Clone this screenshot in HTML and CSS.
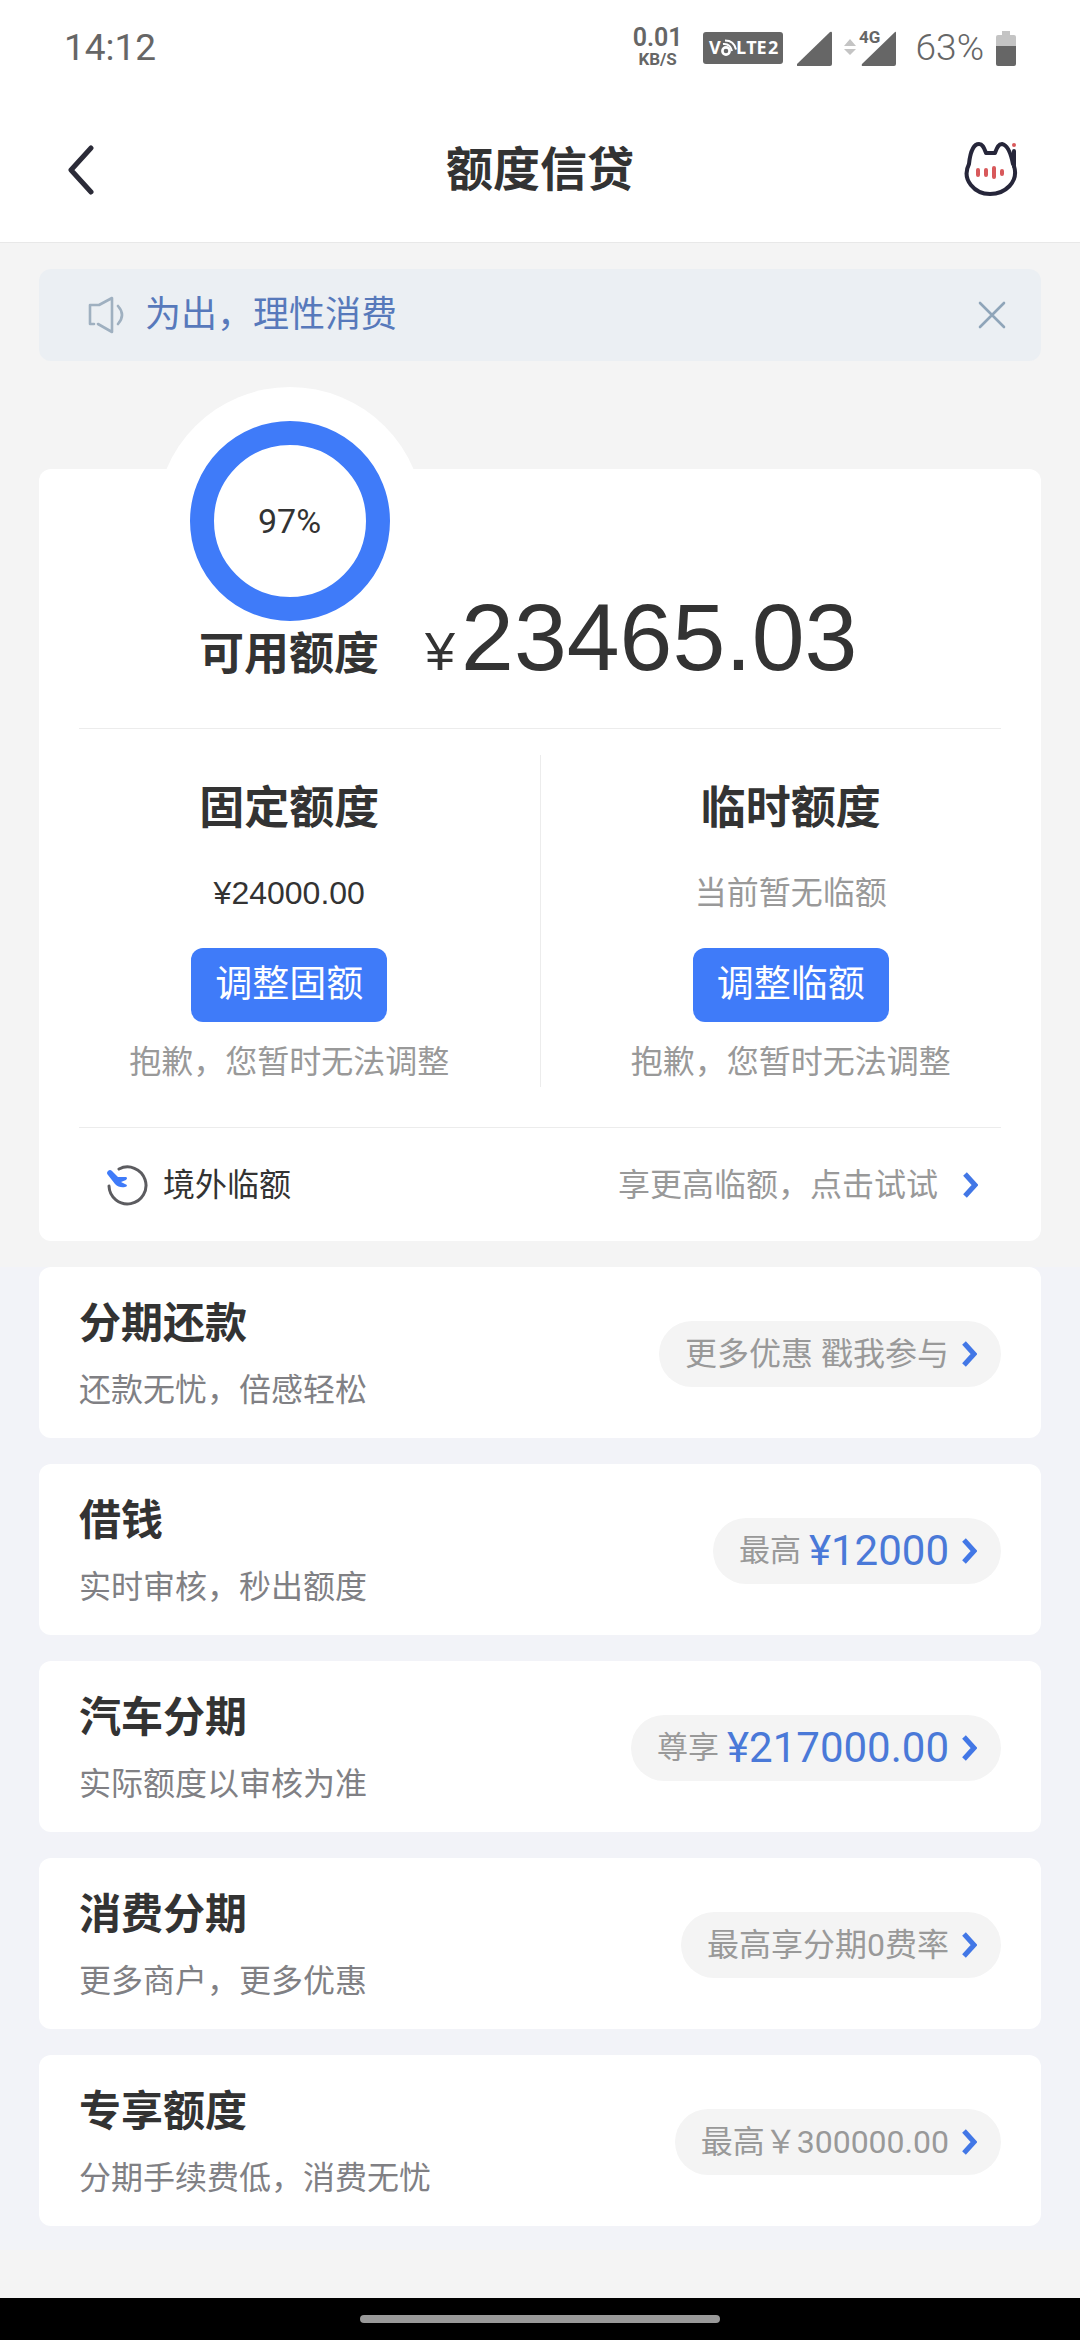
FILE: index.html
```html
<!DOCTYPE html>
<html lang="zh-CN">
<head>
<meta charset="utf-8">
<meta name="viewport" content="width=device-width, initial-scale=1">
<title>额度信贷</title>
<link rel="stylesheet" href="styles.css">
</head>
<body>
<svg width="0" height="0" class="defs" aria-hidden="true">
  <symbol id="chevron" viewBox="0 0 16 26"><path d="M3 2l10 11L3 24" fill="none" stroke="currentColor" stroke-width="5"/></symbol>
</svg>

<div class="status">
  <span class="clock">14:12</span>
  <div class="status-icons">
    <div class="speed"><span class="speed-value">0.01</span><span class="speed-unit">KB/S</span></div>
    <svg class="volte" width="80" height="34" viewBox="0 0 80 34" role="img" aria-label="VoLTE 2">
      <rect y="1" width="80" height="32" rx="3" fill="#666"/>
      <g fill="#fff" class="volte-text">
        <text x="6" y="23">V</text><text x="33" y="23">LTE</text><text x="65" y="23">2</text>
      </g>
      <g fill="none" stroke="#fff" stroke-width="2"><circle cx="23" cy="20" r="3.6" stroke-width="2.6"/><path d="M20 13q7-1 9 7M22 9.500q9 0 11 9"/></g>
    </svg>
    <svg class="signal" width="36" height="35" viewBox="0 0 36 35"><path d="M0 33L33 1q2-1 2 1v31q0 2-2 2H1q-2 0-1-2z" fill="#666"/></svg>
    <svg class="signal-data" width="53" height="51" viewBox="0 -8 53 51">
      <path d="M6 8l6 7H0zM6 24l6-6H0z" fill="#c4c4c4"/>
      <path d="M18 33L51 1q1-1 1 1v31q0 2-2 2H19q-2 0-1-2z" fill="#666"/>
      <text class="net" x="15" y="12" fill="#666">4G</text>
    </svg>
    <span class="percent">63%</span>
    <svg width="20" height="35" viewBox="0 0 20 35"><path d="M6 0h8v4h4q2 0 2 2v9H0V6q0-2 2-2h4z" fill="#c4c4c4"/><path d="M0 15h20v18q0 2-2 2H2q-2 0-2-2z" fill="#666"/></svg>
  </div>
</div>

<header class="header">
  <button class="icon-button" type="button" aria-label="返回">
    <svg width="28" height="50" viewBox="0 0 28 50"><path d="M24 3L4 25l20 22" fill="none" stroke="#2b2b38" stroke-width="5" stroke-linecap="round" stroke-linejoin="round"/></svg>
  </button>
  <h1>额度信贷</h1>
  <button class="icon-button service" type="button" aria-label="客服">
    <svg width="54" height="56" viewBox="0 0 54 56">
      <path d="M50 9v16M50 24c5 16-9 28-24 28S-3 38 5 22C6 12 9 2 15 2c4 0 5 4 7 9h9c2-5 3-9 7-9 6 1 9 10 11 20" fill="none" stroke="#26263a" stroke-width="4" stroke-linejoin="round" stroke-linecap="round"/>
      <circle cx="50" cy="3" r="2" fill="#d8595b"/>
      <path d="M14 28v5M22 28v5M30 26v9M38 29v3" stroke="#d8595b" stroke-width="4" stroke-linecap="round"/>
    </svg>
  </button>
</header>

<main>
  <section class="overview">
    <div class="notice">
      <svg width="40" height="38" viewBox="0 0 40 38" fill="none" stroke="#9fb0c0" stroke-width="2.6" stroke-linecap="round" stroke-linejoin="round"><path d="M7 28H3V9h9L25 2v34L11 28M31 10q8 9 0 18"/></svg>
      <p>为出，理性消费</p>
      <button class="close" type="button" aria-label="关闭"><svg width="30" height="30" viewBox="0 0 30 30"><path d="M3 3l24 24M27 3L3 27" stroke="#8fa5b9" stroke-width="2.6" stroke-linecap="round"/></svg></button>
    </div>

    <div class="card quota">
      <div class="gauge">
        <svg width="200" height="200" viewBox="0 0 200 200"><circle cx="100" cy="100" r="88" fill="none" stroke="#3f7bf9" stroke-width="24"/></svg>
        <span>97%</span>
      </div>
      <div class="available">
        <h2>可用额度</h2>
        <p class="amount"><span class="yen">¥</span>23465.03</p>
      </div>
      <div class="columns">
        <div class="column">
          <h2>固定额度</h2>
          <p class="value">¥24000.00</p>
          <button class="adjust" type="button">调整固额</button>
          <p class="hint">抱歉，您暂时无法调整</p>
        </div>
        <div class="column">
          <h2>临时额度</h2>
          <p class="hint">当前暂无临额</p>
          <button class="adjust" type="button">调整临额</button>
          <p class="hint">抱歉，您暂时无法调整</p>
        </div>
      </div>
      <a class="abroad" href="#">
        <svg width="44" height="44" viewBox="0 0 44 44"><path d="M14 6A18.500 18.500 0 1 1 4 23" fill="none" stroke="#5c5c60" stroke-width="3" stroke-linecap="round"/><path d="M3 8q2-2 4 0l6 6 8 0q2 1 0 3l-5 2 6 3q0 2-2 2-6 1-10-3L3 12q-2-2 0-4z" fill="#3f7bf9"/></svg>
        <span class="abroad-name">境外临额</span>
        <span class="hint">享更高临额，点击试试</span>
        <svg class="chevron" width="16" height="26"><use href="#chevron"/></svg>
      </a>
    </div>
  </section>

  <section class="products">
    <a class="card product" href="#">
      <div><h3>分期还款</h3><p>还款无忧，倍感轻松</p></div>
      <span class="pill">更多优惠 戳我参与<svg class="chevron" width="16" height="26"><use href="#chevron"/></svg></span>
    </a>
    <a class="card product" href="#">
      <div><h3>借钱</h3><p>实时审核，秒出额度</p></div>
      <span class="pill"><span class="prefix">最高</span><span class="price">¥12000</span><svg class="chevron" width="16" height="26"><use href="#chevron"/></svg></span>
    </a>
    <a class="card product" href="#">
      <div><h3>汽车分期</h3><p>实际额度以审核为准</p></div>
      <span class="pill"><span class="prefix">尊享</span><span class="price">¥217000.00</span><svg class="chevron" width="16" height="26"><use href="#chevron"/></svg></span>
    </a>
    <a class="card product" href="#">
      <div><h3>消费分期</h3><p>更多商户，更多优惠</p></div>
      <span class="pill">最高享分期0费率<svg class="chevron" width="16" height="26"><use href="#chevron"/></svg></span>
    </a>
    <a class="card product" href="#">
      <div><h3>专享额度</h3><p>分期手续费低，消费无忧</p></div>
      <span class="pill">最高￥300000.00<svg class="chevron" width="16" height="26"><use href="#chevron"/></svg></span>
    </a>
  </section>
</main>

<footer class="gesture-bar"><span></span></footer>
</body>
</html>
```

FILE: styles.css
```css
* { box-sizing: border-box; }

body {
  margin: 0;
  min-height: 100vh;
  display: flex;
  flex-direction: column;
  background: #f4f4f4;
  color: #333;
  font-family: Roboto, "Noto Sans CJK SC", sans-serif;
  font-size: 32px;
  line-height: 46px;
}

h1, h2, h3, p { margin: 0; }
a { color: inherit; text-decoration: none; }
svg { display: block; flex: none; }
button { border: 0; padding: 0; background: none; font: inherit; color: inherit; }
.defs { position: absolute; }

/* Status bar */
.status {
  display: flex;
  justify-content: space-between;
  align-items: center;
  height: 96px;
  padding: 0 64px;
  background: #fff;
  color: #666;
}
.clock { font-size: 37px; }
.status-icons { display: flex; align-items: center; }
.speed { display: flex; flex-direction: column; align-items: center; font-weight: 600; padding: 0 20px 2px 0; }
.speed-value { font-size: 25px; line-height: 24px; }
.speed-unit { font-size: 17px; line-height: 18px; font-weight: 700; }
.volte { margin-right: 14px; }
.volte-text { font: 700 18px "Open Sans", sans-serif; }
.signal { margin-right: 11px; }
.signal-data { margin-right: 19px; }
.net { font: 700 17px Roboto, sans-serif; }
.percent { font-size: 37px; font-weight: 300; margin-right: 12px; }

/* Title bar */
.header {
  display: grid;
  grid-template-columns: 1fr auto 1fr;
  align-items: center;
  height: 147px;
  padding: 2px 54px 0;
  background: #fff;
  border-bottom: 1px solid #e8e8e8;
}
.icon-button { display: flex; justify-content: center; width: 54px; }
.service { justify-self: end; margin-right: 8px; }
h1 { font-size: 47px; line-height: 64px; font-weight: 700; }

main { flex: 1; }

.overview { padding: 26px 39px; }
.notice {
  display: flex;
  align-items: center;
  gap: 18px;
  height: 92px;
  padding: 0 34px 0 48px;
  border-radius: 12px;
  background: #ebeff3;
  color: #5779bb;
  font-size: 36px;
}
.notice p { flex: 1; }

.card { border-radius: 12px; background: #fff; }

/* Quota card */
.quota { position: relative; margin-top: 108px; }
.gauge {
  position: absolute;
  top: -82px;
  left: 25%;
  display: grid;
  place-items: center;
  width: 268px;
  height: 268px;
  margin-left: -134px;
  border-radius: 50%;
  background: #fff;
  font-size: 34px;
}
.gauge > * { grid-area: 1 / 1; }
.available {
  position: relative;
  display: flex;
  align-items: baseline;
  gap: 46px;
  margin: 0 40px;
  padding: 114px 0 23px 120px;
  border-bottom: 1px solid #ececec;
}
h2 { font-size: 45px; line-height: 60px; font-weight: 700; }
.amount { font: 95px/108px "Liberation Sans", sans-serif; }
.yen { font-size: 54px; margin-right: 6px; }
.columns { display: flex; padding: 26px 0 40px; }
.column { flex: 1; display: flex; flex-direction: column; align-items: center; padding: 24px 0 2px; }
.column + .column { border-left: 1px solid #ececec; }
.column h2 { margin-bottom: 31px; }
.value { font-family: "Liberation Sans", sans-serif; }
.hint { color: #999; }
.adjust {
  height: 74px;
  margin: 32px 0 17px;
  padding: 0 24px;
  border-radius: 12px;
  background: #3f7bf9;
  color: #fff;
  font-size: 37px;
}
.abroad {
  display: flex;
  align-items: center;
  height: 114px;
  margin: 0 40px;
  padding: 0 23px 0 26px;
  border-top: 1px solid #ececec;
}
.abroad-name { flex: 1; margin-left: 14px; }
.chevron { color: #4277e6; }
.abroad .chevron { margin-left: 24px; }

/* Product list */
.products {
  display: flex;
  flex-direction: column;
  gap: 26px;
  padding: 0 39px 24px;
  background: #f2f3f8;
}
.product { display: flex; justify-content: space-between; align-items: center; padding: 27px 40px 25px; }
.product h3 { margin-bottom: 13px; font-size: 42px; line-height: 60px; font-weight: 700; }
.product p { color: #808084; }
.pill {
  display: flex;
  align-items: center;
  height: 66px;
  padding: 0 24px 0 26px;
  border-radius: 33px;
  background: #f4f4f4;
  color: #999;
}
.pill .chevron { margin-left: 12px; }
.prefix { font-size: 31px; margin-right: 8px; }
.price { font-size: 42px; color: #4a79d8; }

.gesture-bar { display: flex; justify-content: center; align-items: center; height: 42px; background: #000; }
.gesture-bar span { width: 33.333%; height: 8px; border-radius: 4px; background: #999; }
```
